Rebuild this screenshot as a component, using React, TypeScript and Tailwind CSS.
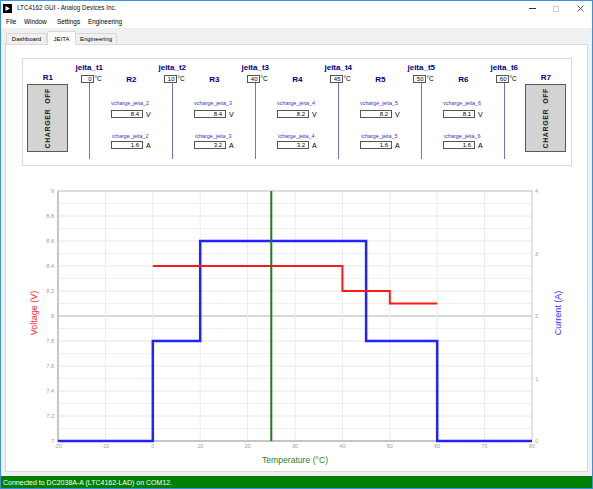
import React from 'react';

const temps = ['0', '10', '40', '45', '50', '60'];
const vcharge = ['8.4', '8.4', '8.2', '8.2', '8.1'];
const icharge = ['1.6', '3.2', '3.2', '1.6', '1.6'];

const X = (t: number) => 58 + (t + 20) * 4.74;
const YV = (v: number) => 441 - (v - 7) * 125;

function ChargerCol({ label }: { label: string }) {
  return (
    <div className="flex flex-col items-center pt-[15px]">
      <span className="text-[8px] leading-[8px] font-bold text-[#00007f]">{label}</span>
      <div className="mt-[2px] w-[41px] h-[68px] bg-[#d3d3d3] border border-[#5a5a5a] flex items-center justify-center">
        <span className="[writing-mode:vertical-rl] rotate-180 text-[7px] font-bold tracking-[0.6px] text-[#202020] whitespace-pre">
          CHARGER  OFF
        </span>
      </div>
    </div>
  );
}

function TempCol({ n, value }: { n: number; value: string }) {
  return (
    <div className="flex flex-col items-center pt-[5px]">
      <span className="text-[8px] leading-[8px] font-bold text-[#00007f]">jeita_t{n}</span>
      <div className="self-start ml-[12px] mt-[3px] flex items-center">
        <div className="w-[13px] h-[8px] border border-[#555] bg-white text-[6px] leading-[6px] text-right pr-px">{value}</div>
        <span className="ml-px text-[6.5px] leading-none">°C</span>
      </div>
      <div className="w-px h-[76px] bg-[#7474c4]" />
    </div>
  );
}

function ValueBox({ value, unit }: { value: string; unit: string }) {
  return (
    <div className="flex items-center">
      <div className="w-[32px] h-[8px] border border-[#555] bg-white text-[6px] leading-[6px] text-right pr-[3px]">{value}</div>
      <span className="ml-[3px] text-[7px] leading-none">{unit}</span>
    </div>
  );
}

function SettingCol({ n }: { n: number }) {
  return (
    <div className="flex flex-col pt-[17px] pl-px">
      <span className="self-center text-[8px] leading-[8px] font-bold text-[#00007f]">R{n}</span>
      <span className="mt-[16px] text-[5.4px] leading-[6px] text-[#3535c8]">vcharge_jeita_{n}</span>
      <div className="mt-[4px]">
        <ValueBox value={vcharge[n - 2]} unit="V" />
      </div>
      <span className="mt-[15px] ml-px text-[5.4px] leading-[6px] text-[#3535c8]">icharge_jeita_{n}</span>
      <div className="mt-[2px]">
        <ValueBox value={icharge[n - 2]} unit="A" />
      </div>
    </div>
  );
}

function Chart() {
  const hLines = Array.from({ length: 21 }, (_, i) => 191 + i * 12.5);
  const vLines = [-10, 0, 10, 20, 30, 40, 50, 60, 70];
  const vLabels = [9, 8.8, 8.6, 8.4, 8.2, 8, 7.8, 7.6, 7.4, 7.2, 7];
  const tLabels = [-20, -10, 0, 10, 20, 30, 40, 50, 60, 70, 80];
  return (
    <svg width={580} height={305} viewBox="6 166 580 305" className="block">
      {hLines.map((y, i) => (
        <line key={y} x1={58} x2={532} y1={y} y2={y} stroke={i % 2 === 0 ? '#e6e6e6' : '#f0f0f0'} strokeWidth={1} />
      ))}
      <line x1={58} x2={532} y1={316} y2={316} stroke="#cfcfcf" strokeWidth={1.5} />
      {vLines.map((t) => (
        <line key={t} x1={X(t)} x2={X(t)} y1={191} y2={441} stroke="#ebebeb" strokeWidth={1} />
      ))}
      <rect x={58} y={191} width={474} height={250} fill="none" stroke="#c8c8c8" strokeWidth={1} />
      <line x1={58} x2={58} y1={191} y2={442} stroke="#bcbcbc" strokeWidth={1.5} />
      <line x1={57} x2={532} y1={441} y2={441} stroke="#bcbcbc" strokeWidth={1.5} />

      {vLabels.map((v) => (
        <text key={v} x={54} y={YV(v) + 2} textAnchor="end" fontSize={5.5} fill="#a0a0a0">
          {v}
        </text>
      ))}
      {tLabels.map((t) => (
        <text key={t} x={X(t)} y={448} textAnchor="middle" fontSize={5.5} fill="#a0a0a0">
          {t}
        </text>
      ))}
      {[0, 1, 2, 3, 4].map((a) => (
        <text key={a} x={535} y={441 - a * 62.5 + 2} fontSize={5.5} fill="#a0a0a0">
          {a}
        </text>
      ))}

      <path
        d={`M58 441 H${X(0)} V341 H${X(10)} V241 H${X(45)} V341 H${X(60)} V441 H532`}
        fill="none"
        stroke="#2222ff"
        strokeWidth={2.5}
      />
      <path
        d={`M${X(0)} 266 H${X(40)} V291 H${X(50)} V303.5 H${X(60)}`}
        fill="none"
        stroke="#ff1a1a"
        strokeWidth={2}
      />
      <line x1={X(25)} x2={X(25)} y1={191} y2={441} stroke="#1f7a1f" strokeWidth={2} />

      <text x={37} y={313} transform="rotate(-90 37 313)" textAnchor="middle" fontSize={9} fill="#ff2a2a">
        Voltage (V)
      </text>
      <text x={561} y={313} transform="rotate(-90 561 313)" textAnchor="middle" fontSize={9} fill="#3030ff">
        Current (A)
      </text>
      <text x={295} y={463} textAnchor="middle" fontSize={8.6} fill="#2f7f2f">
        Temperature (°C)
      </text>
    </svg>
  );
}

export default function App() {
  return (
    <div className="w-[593px] h-[489px] border border-[#3d92d8] bg-[#f0f0f0] flex flex-col overflow-hidden font-['Liberation_Sans',Arial,sans-serif] text-black">
      {/* title bar */}
      <div className="h-[15px] bg-white flex items-center shrink-0">
        <div className="ml-[2px] w-[9px] h-[9px] bg-black flex items-center justify-center">
          <svg width="7" height="7" viewBox="0 0 7 7">
            <path d="M1.5 1 L6 3.5 L1.5 6 Z" fill="#fff" />
          </svg>
        </div>
        <span className="ml-[5px] text-[6.3px] leading-none text-[#111]">LTC4162 GUI - Analog Devices Inc.</span>
        <div className="ml-auto flex h-full">
          <div className="w-[24px] flex items-center justify-center">
            <div className="w-[7px] h-px bg-[#333]" />
          </div>
          <div className="w-[24px] flex items-center justify-center">
            <div className="w-[6px] h-[6px] border border-[#cfcfcf]" />
          </div>
          <div className="w-[24px] flex items-center justify-center">
            <svg width="7" height="7" viewBox="0 0 7 7">
              <path d="M0.5 0.5 L6.5 6.5 M6.5 0.5 L0.5 6.5" stroke="#333" strokeWidth="0.8" />
            </svg>
          </div>
        </div>
      </div>

      {/* menu bar */}
      <div className="h-[12px] bg-white flex items-center pl-[5px] text-[6.4px] leading-none shrink-0">
        <span className="w-[18px]">File</span>
        <span className="w-[33px]">Window</span>
        <span className="w-[31px]">Settings</span>
        <span>Engineering</span>
      </div>

      {/* tabs */}
      <div className="h-[16px] flex items-end pl-[5px] shrink-0">
        <div className="w-[41px] h-[11px] border border-b-0 border-[#d9d9d9] bg-[#f0f0f0] flex items-center justify-center text-[6px] leading-none">
          Dashboard
        </div>
        <div className="relative z-10 -mb-px w-[29px] h-[14px] border border-b-0 border-[#d9d9d9] bg-white flex items-center justify-center text-[6px] leading-none">
          JEITA
        </div>
        <div className="w-[41px] h-[11px] border border-b-0 border-l-0 border-[#d9d9d9] bg-[#f0f0f0] flex items-center justify-center text-[6px] leading-none">
          Engineering
        </div>
      </div>

      {/* tab panel */}
      <div className="h-[428px] mx-[4px] bg-white border border-[#d9d9d9] flex flex-col shrink-0">
        <div className="ml-[16px] mt-[13px] w-[550px] h-[108px] border border-[#dcdcdc] grid grid-cols-[repeat(13,41.5px)] pl-[4px]">
          <ChargerCol label="R1" />
          <TempCol n={1} value={temps[0]} />
          <SettingCol n={2} />
          <TempCol n={2} value={temps[1]} />
          <SettingCol n={3} />
          <TempCol n={3} value={temps[2]} />
          <SettingCol n={4} />
          <TempCol n={4} value={temps[3]} />
          <SettingCol n={5} />
          <TempCol n={5} value={temps[4]} />
          <SettingCol n={6} />
          <TempCol n={6} value={temps[5]} />
          <ChargerCol label="R7" />
        </div>
        <Chart />
      </div>

      {/* status bar */}
      <div className="mt-[4px] h-[12px] bg-[#008000] text-white text-[7px] leading-none pl-[2px] flex items-center shrink-0">
        Connected to DC2038A-A (LTC4162-LAD) on COM12.
      </div>
    </div>
  );
}
